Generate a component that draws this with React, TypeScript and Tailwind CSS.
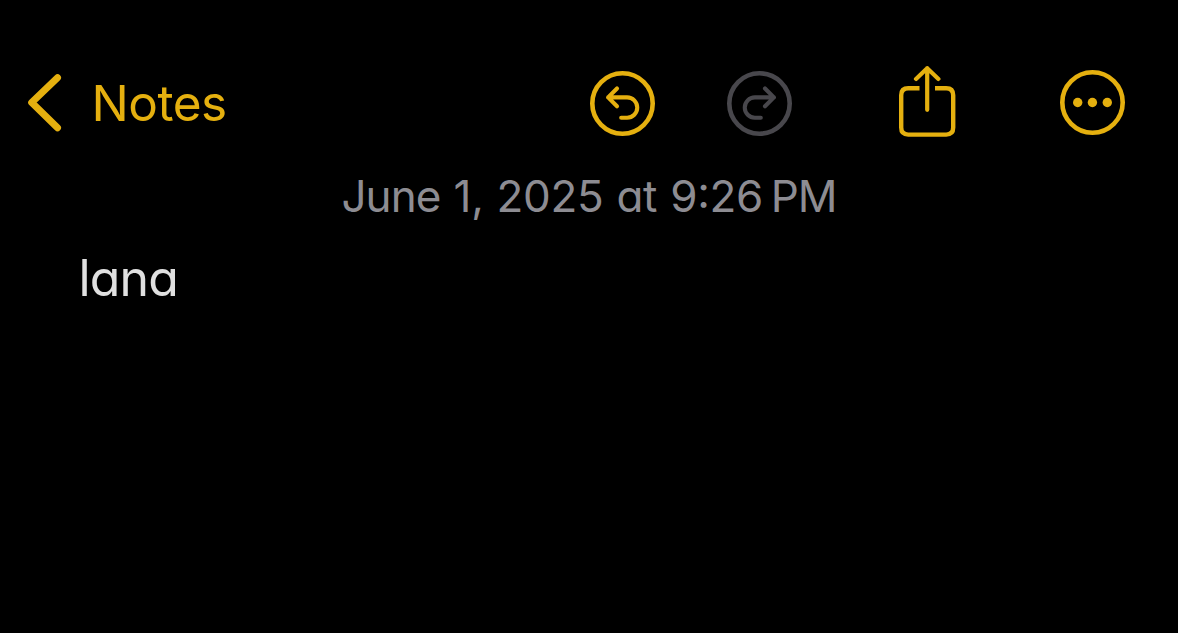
import React from "react";

type IconProps = { className?: string };

const BackIcon = ({ className }: IconProps) => (
  <svg width="40" height="72" viewBox="0 0 40 72" fill="none" stroke="currentColor" className={className}>
    <path d="M33.5 10.7L7.7 35.6L33.5 60.8" strokeWidth="7" strokeLinecap="round" strokeLinejoin="round" />
  </svg>
);

const UndoIcon = ({ className }: IconProps) => (
  <svg width="72" height="72" viewBox="0 0 72 72" fill="none" stroke="currentColor" className={className}>
    <circle cx="36.5" cy="36.5" r="30.2" strokeWidth="4.6" />
    <path
      d="M31 21.5L22.1 30.4L31 39.3M22.1 30.4H41.1A9.9 9.9 0 0 1 41.1 50.7H35.2"
      strokeWidth="4.1"
      strokeLinecap="round"
      strokeLinejoin="round"
    />
  </svg>
);

const RedoIcon = ({ className }: IconProps) => (
  <svg width="72" height="72" viewBox="0 0 72 72" fill="none" stroke="currentColor" className={className}>
    <circle cx="36.5" cy="36.5" r="30.2" strokeWidth="4.6" />
    <path
      d="M42 21.5L50.9 30.4L42 39.3M50.9 30.4H31.9A9.9 9.9 0 0 0 31.9 50.7H37.8"
      strokeWidth="4.1"
      strokeLinecap="round"
      strokeLinejoin="round"
    />
  </svg>
);

const ShareIcon = ({ className }: IconProps) => (
  <svg width="72" height="74" viewBox="0 0 72 74" fill="none" stroke="currentColor" className={className}>
    <path
      d="M28.5 22.2H17.2Q10.2 22.2 10.2 29.2V61.6Q10.2 68.6 17.2 68.6H55.2Q62.2 68.6 62.2 61.6V29.2Q62.2 22.2 55.2 22.2H44"
      strokeWidth="4.4"
    />
    <path
      d="M36.2 43.8V2.2M25 12.9L36.2 2.2L47.4 12.9"
      strokeWidth="4.2"
      strokeLinecap="round"
      strokeLinejoin="round"
    />
  </svg>
);

const MoreIcon = ({ className }: IconProps) => (
  <svg width="72" height="72" viewBox="0 0 72 72" className={className}>
    <circle cx="36.5" cy="35.5" r="30.2" fill="none" stroke="currentColor" strokeWidth="4.6" />
    <g fill="currentColor">
      <circle cx="21.7" cy="35.5" r="4.7" />
      <circle cx="36.4" cy="35.5" r="4.7" />
      <circle cx="51.3" cy="35.5" r="4.7" />
    </g>
  </svg>
);

const Toolbar = () => (
  <header className="flex h-[94px] items-center justify-between pl-6 pr-[50px] text-[#e5b00f]">
    <button aria-label="Back to Notes" className="flex items-center">
      <BackIcon />
      <span className="ml-[27.5px] mt-px whitespace-nowrap text-[49.5px] leading-none tracking-[-0.5px]">Notes</span>
    </button>
    <div className="flex items-center">
      <button aria-label="Undo">
        <UndoIcon />
      </button>
      <button aria-label="Redo" disabled className="ml-[65px] text-[#48474c]">
        <RedoIcon />
      </button>
      <button aria-label="Share" className="ml-24">
        <ShareIcon />
      </button>
      <button aria-label="More" className="ml-[93px]">
        <MoreIcon />
      </button>
    </div>
  </header>
);

const App = () => {
  return (
    <div className="h-screen w-full overflow-hidden bg-black pt-14 font-['Inter',sans-serif] [font-feature-settings:'cv11']">
      <Toolbar />
      <main>
        <p className="pt-[19px] text-center text-[44px] leading-[54px] tracking-[-0.3px] text-[#8d8c92] [word-spacing:0.9px]">
          <span className="tracking-[-0.9px]">June</span> 1, 2025 at 9
          <span className="[font-feature-settings:'case']">:</span>26{"\u202f"}
          <span className="tracking-[-1px]">PM</span>
        </p>
        <p className="mt-[25px] pl-[78.5px] text-[50px] leading-[60px] tracking-[-0.8px] text-[#e0e0e0]">lana</p>
      </main>
    </div>
  );
};

export default App;
